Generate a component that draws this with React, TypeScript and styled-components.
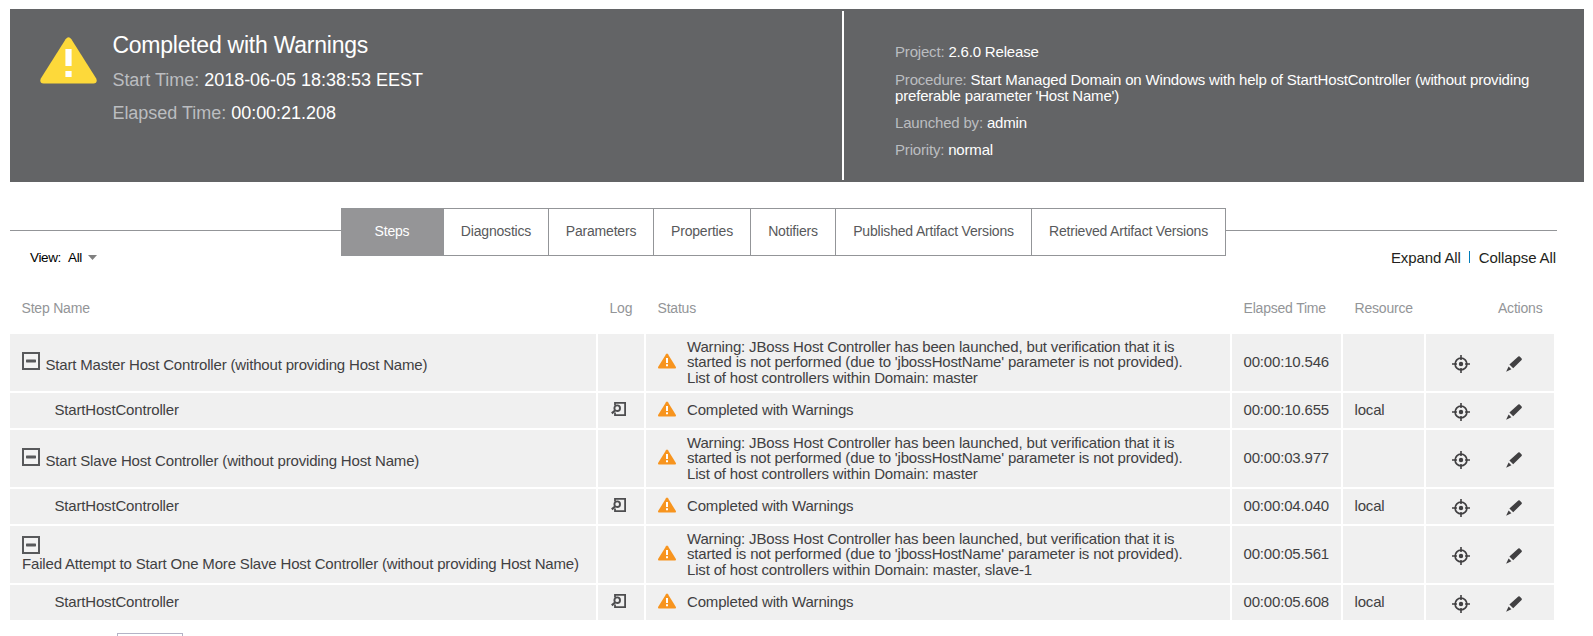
import React from 'react';
import styled, { createGlobalStyle } from 'styled-components';

const GlobalStyle = createGlobalStyle`
  * { box-sizing: border-box; }
  body {
    margin: 0;
    background: #fff;
    font-family: "Liberation Sans", Arial, sans-serif;
    color: #414042;
    overflow: hidden;
  }
`;

const Page = styled.main`
  width: 1593px;
  height: 636px;
  padding: 9px 9px 0 10px;
  overflow: hidden;
`;

const Header = styled.header`
  display: flex;
  height: 173px;
  padding: 2px 0;
  background: #636466;
  color: #fff;
`;

const Summary = styled.section`
  display: flex;
  width: 834px;
  padding: 21px 0 0 30px;
  border-right: 2px solid #fff;
`;

const BigWarning = styled.svg`
  width: 57px;
  height: 47px;
  margin: 5px 15.4px 0 0;
`;

const Title = styled.h1`
  margin: 0 0 11px;
  font-size: 23px;
  font-weight: 400;
  line-height: 27px;
  letter-spacing: -0.24px;
`;

const SummaryLine = styled.p`
  margin: 0 0 12px;
  font-size: 18px;
  line-height: 21px;
  letter-spacing: -0.02px;
`;

const Details = styled.section`
  flex: 1;
  padding: 33px 40px 0 51px;
`;

const DetailLine = styled.p`
  margin: 0 0 11px;
  font-size: 15px;
  line-height: 16px;
  letter-spacing: -0.18px;

  &:first-child { margin-bottom: 12px; }
`;

const Label = styled.span`
  color: #bbbdc0;
`;

const TabBar = styled.nav`
  display: flex;
  width: 1547px;
  height: 48px;
  margin-top: 26px;
`;

const Rule = styled.div<{ $width?: number }>`
  ${p => (p.$width ? `width: ${p.$width}px;` : 'flex: 1;')}
  height: 1px;
  margin-top: 22px;
  background: #939598;
`;

const Tab = styled.button<{ $width: number; $active?: boolean }>`
  width: ${p => p.$width}px;
  padding: 0 0 2px;
  border: 1px solid #939598;
  border-left: 0;
  background: ${p => (p.$active ? '#959597' : '#fff')};
  color: ${p => (p.$active ? '#fff' : '#58595b')};
  font: 14px "Liberation Sans", Arial, sans-serif;
  letter-spacing: -0.19px;
  white-space: nowrap;
`;

const Toolbar = styled.div`
  display: flex;
  justify-content: space-between;
  width: 1547px;
  height: 40px;
  padding: 0 1px 0 20px;
  margin-top: -7px;
  line-height: 18px;
`;

const ViewPicker = styled.div`
  display: flex;
  align-items: flex-start;
  color: #000;
  font-size: 13.5px;
  letter-spacing: -0.35px;
  gap: 7px;
`;

const Caret = styled.svg`
  width: 9px;
  height: 5px;
  margin-top: 6px;
  margin-left: -1px;
`;

const TreeLinks = styled.div`
  display: flex;
  color: #231f20;
  font-size: 15px;
  letter-spacing: -0.1px;
`;

const Separator = styled.span`
  width: 1px;
  height: 12px;
  margin: 2px 9px 0 8px;
  background: #007dba;
`;

const Grid = styled.div`
  display: grid;
  grid-template-columns: 586px 46px 584px 109px 81px 128px;
  column-gap: 2px;
`;

const HeadRow = styled(Grid)`
  height: 45px;
  padding-top: 11px;
  color: #939598;
  font-size: 14px;
  line-height: 16px;
  letter-spacing: -0.2px;
`;

const HeadCell = styled.div<{ $right?: boolean }>`
  padding: 0 11.5px;
  text-align: ${p => (p.$right ? 'right' : 'left')};
  white-space: nowrap;
`;

const Row = styled(Grid)<{ $tall: boolean }>`
  height: ${p => (p.$tall ? 57 : 35)}px;
  margin-bottom: 2px;
`;

const Cell = styled.div`
  display: flex;
  align-items: center;
  padding: 0 12px 1px 11.5px;
  background: #f0f0f0;
  font-size: 15px;
  line-height: 15.5px;
  letter-spacing: -0.17px;
`;

const StepCell = styled(Cell)<{ $child?: boolean; $stacked?: boolean }>`
  flex-direction: ${p => (p.$stacked ? 'column' : 'row')};
  align-items: ${p => (p.$stacked ? 'flex-start' : 'center')};
  padding-left: ${p => (p.$child ? 44.4 : 12)}px;
  padding-top: ${p => (p.$stacked ? 10 : 0)}px;
  gap: ${p => (p.$stacked ? 2 : 5.4)}px;
  white-space: nowrap;
`;

const StepLabel = styled.span<{ $drop?: boolean }>`
  margin-top: ${p => (p.$drop ? 5 : 0)}px;
`;

const Collapse = styled.svg<{ $raised?: boolean }>`
  flex: none;
  width: 18px;
  height: 18px;
  margin-top: ${p => (p.$raised ? -2 : 0)}px;
`;

const StatusCell = styled(Cell)`
  padding-left: 12px;
  gap: 11px;
`;

const SmallWarning = styled.svg`
  flex: none;
  width: 18px;
  height: 16px;
  margin-top: -3px;
`;

const StatusText = styled.div`
  white-space: pre-line;
`;

const LogIcon = styled.svg`
  width: 16px;
  height: 16px;
  margin: -2px 0 0 1px;
`;

const ActionCell = styled(Cell)`
  padding: 3px 0 0 26px;
`;

const TargetIcon = styled.svg`
  width: 18px;
  height: 18px;
`;

const PencilIcon = styled.svg`
  width: 16px;
  height: 16px;
  margin: -1px 0 0 36px;
`;

const PageSize = styled.div`
  width: 66px;
  height: 24px;
  margin: 13px 0 0 107px;
  border: 1px solid #b4b3c6;
`;

const warningText = (domain: string) =>
  `Warning: JBoss Host Controller has been launched, but verification that it is
started is not performed (due to 'jbossHostName' parameter is not provided).
List of host controllers within Domain: ${domain}`;

type Step = { name: string; child?: boolean; stacked?: boolean; status: string; time: string };

const done = 'Completed with Warnings';
const steps: Step[] = [
  { name: 'Start Master Host Controller (without providing Host Name)', status: warningText('master'), time: '00:00:10.546' },
  { name: 'StartHostController', child: true, status: done, time: '00:00:10.655' },
  { name: 'Start Slave Host Controller (without providing Host Name)', status: warningText('master'), time: '00:00:03.977' },
  { name: 'StartHostController', child: true, status: done, time: '00:00:04.040' },
  { name: 'Failed Attempt to Start One More Slave Host Controller (without providing Host Name)', stacked: true, status: warningText('master, slave-1'), time: '00:00:05.561' },
  { name: 'StartHostController', child: true, status: done, time: '00:00:05.608' },
];

const tabs: [string, number][] = [
  ['Steps', 103],
  ['Diagnostics', 105],
  ['Parameters', 105],
  ['Properties', 97],
  ['Notifiers', 85],
  ['Published Artifact Versions', 196],
  ['Retrieved Artifact Versions', 194],
];

function StepRow({ step }: { step: Step }) {
  return (
    <Row $tall={!step.child}>
      <StepCell $child={step.child} $stacked={step.stacked}>
        {!step.child && (
          <Collapse viewBox="0 0 18 18" $raised={!step.stacked}>
            <rect x="1" y="1" width="16" height="16" fill="#f3f3f3" stroke="#58595b" strokeWidth="2" />
            <rect x="4" y="7.6" width="10" height="2.8" rx="0.6" fill="#58595b" />
          </Collapse>
        )}
        <StepLabel $drop={!step.child && !step.stacked}>{step.name}</StepLabel>
      </StepCell>
      <Cell>
        {step.child && (
          <LogIcon viewBox="0 0 16 16" fill="none" stroke="#4d4d4f">
            <path d="M4 4.5V1.9H14.1V14.1H4V11.5" strokeWidth="1.8" />
            <circle cx="6.2" cy="7.2" r="2.8" strokeWidth="1.9" fill="#f0f0f0" />
            <path d="M4.3 9.2L.8 12.4" strokeWidth="2.2" />
          </LogIcon>
        )}
      </Cell>
      <StatusCell>
        <SmallWarning viewBox="0 0 18 16">
          <path d="M8 1.3Q9-.1 10 1.3L17.9 14.1Q18.2 15.4 17.2 15.5H.8Q-.2 15.4.1 14.1Z" fill="#f7941e" />
          <path d="M8 5h2v5H8zM8 11.3h2v2H8z" fill="#fff" />
        </SmallWarning>
        <StatusText>{step.status}</StatusText>
      </StatusCell>
      <Cell>{step.time}</Cell>
      <Cell>{step.child ? 'local' : ''}</Cell>
      <ActionCell>
        <TargetIcon viewBox="0 0 18 18" fill="none" stroke="#414042">
          <circle cx="9" cy="9" r="5.9" strokeWidth="1.7" />
          <circle cx="9" cy="9" r="2.2" fill="#414042" stroke="none" />
          <path d="M9 0V5M9 13V18M0 9H5M13 9H18" strokeWidth="1.6" />
        </TargetIcon>
        <PencilIcon viewBox="0 0 16 16" fill="#414042">
          <path d="M12.3.5Q13-.1 13.7.5L15.6 2.5Q16.2 3.2 15.6 3.9L7.2 12.3 3.4 8.5ZM2.6 10.4L5.4 13.2.1 15.8Z" />
        </PencilIcon>
      </ActionCell>
    </Row>
  );
}

export default function App() {
  return (
    <Page>
      <GlobalStyle />
      <Header>
        <Summary>
          <BigWarning viewBox="0 0 57 47">
            <path d="M25.6 2.2Q28.5-1.6 31.4 2.2L56.2 41.5Q58 46 53.5 46.5H3.5Q-1 46 .8 41.5Z" fill="#fdd93a" />
            <path d="M25.4 12h6.2v17h-6.2zM25.4 34h6.2v6h-6.2z" fill="#fff" />
          </BigWarning>
          <div>
            <Title>Completed with Warnings</Title>
            <SummaryLine><Label>Start Time:</Label> 2018-06-05 18:38:53 EEST</SummaryLine>
            <SummaryLine><Label>Elapsed Time:</Label> 00:00:21.208</SummaryLine>
          </div>
        </Summary>
        <Details>
          <DetailLine><Label>Project:</Label> 2.6.0 Release</DetailLine>
          <DetailLine>
            <Label>Procedure:</Label> Start Managed Domain on Windows with help of StartHostController (without providing preferable parameter 'Host Name')
          </DetailLine>
          <DetailLine><Label>Launched by:</Label> admin</DetailLine>
          <DetailLine><Label>Priority:</Label> normal</DetailLine>
        </Details>
      </Header>
      <TabBar>
        <Rule $width={331} />
        {tabs.map(([name, width], i) => (
          <Tab key={name} $width={width} $active={i === 0}>{name}</Tab>
        ))}
        <Rule />
      </TabBar>
      <Toolbar>
        <ViewPicker>
          <span>View:</span>
          <span>All</span>
          <Caret viewBox="0 0 9 5"><path d="M0 0H9L4.5 5Z" fill="#808080" /></Caret>
        </ViewPicker>
        <TreeLinks>
          <span>Expand All</span>
          <Separator />
          <span>Collapse All</span>
        </TreeLinks>
      </Toolbar>
      <HeadRow>
        <HeadCell>Step Name</HeadCell>
        <HeadCell>Log</HeadCell>
        <HeadCell>Status</HeadCell>
        <HeadCell>Elapsed Time</HeadCell>
        <HeadCell>Resource</HeadCell>
        <HeadCell $right>Actions</HeadCell>
      </HeadRow>
      {steps.map((step, i) => <StepRow key={i} step={step} />)}
      <PageSize />
    </Page>
  );
}
